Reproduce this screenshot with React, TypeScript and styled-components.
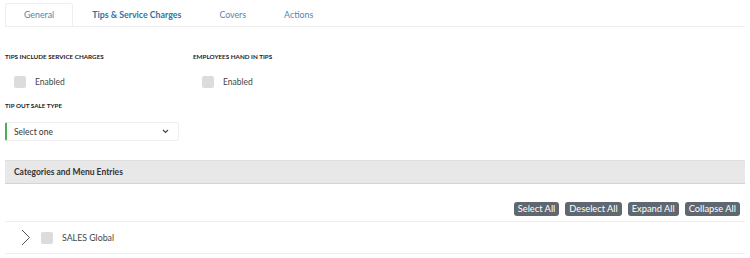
import React from "react";
import styled, { createGlobalStyle } from "styled-components";

const GlobalStyle = createGlobalStyle`
  html, body {
    margin: 0;
    padding: 0;
    background: #ffffff;
    font-family: Lato, "Open Sans", sans-serif;
    color: #333;
  }
`;

const Page = styled.div`
  width: 750px;
  height: 258px;
  padding: 3px 5px 0 5px;
  box-sizing: border-box;
  overflow: hidden;
`;

const TabBar = styled.div`
  display: flex;
  height: 23px;
  border-bottom: 1px solid #eeeeee;
`;

const Tab = styled.div<{ active?: boolean; bold?: boolean }>`
  display: flex;
  align-items: center;
  justify-content: center;
  height: 23px;
  box-sizing: border-box;
  padding: 0 18px 2px;
  font-size: 8.8px;
  font-weight: ${(p) => (p.bold ? 700 : 400)};
  color: ${(p) => (p.bold ? "#2b74a8" : "#4a87b3")};
  border: 1px solid ${(p) => (p.active ? "#eeeeee" : "transparent")};
  border-bottom: none;
  border-radius: 3px 3px 0 0;
  background: #fff;
  margin-bottom: -1px;
`;

const FieldRow = styled.div`
  display: flex;
  margin-top: 25px;
`;

const Field = styled.div<{ width?: number }>`
  width: ${(p) => p.width ?? 188}px;
`;

const Label = styled.div`
  font-size: 6.3px;
  font-weight: 700;
  color: #222;
  text-transform: uppercase;
  line-height: 10px;
`;

const CheckLine = styled.label`
  display: flex;
  align-items: center;
  gap: 9px;
  margin-top: 14px;
  padding-left: 9px;
  font-size: 8.5px;
  color: #444;
`;

const Box = styled.span`
  width: 12px;
  height: 12px;
  border-radius: 2px;
  background: #dcdcdc;
  display: inline-block;
`;

const SaleType = styled.div`
  margin-top: 13px;
`;

const Select = styled.div`
  margin-top: 11px;
  width: 174px;
  height: 19px;
  box-sizing: border-box;
  border: 1px solid #efefef;
  border-left: 2px solid #4cae4f;
  border-radius: 2px;
  display: flex;
  align-items: center;
  justify-content: space-between;
  padding: 0 9px 0 7px;
  font-size: 8.5px;
  color: #333;
`;

const SectionHeader = styled.div`
  margin-top: 19px;
  height: 24px;
  background: #e8e8e8;
  border-top: 1px solid #dedede;
  border-bottom: 1px solid #d4d4d4;
  box-sizing: border-box;
  display: flex;
  align-items: center;
  padding-left: 9px;
  font-size: 8.5px;
  font-weight: 700;
  color: #333;
`;

const Toolbar = styled.div`
  display: flex;
  justify-content: flex-end;
  gap: 6px;
  margin-top: 18px;
  padding-right: 5px;
  padding-bottom: 5px;
  border-bottom: 1px solid #eeeeee;
`;

const Btn = styled.button`
  height: 14px;
  padding: 0 4px;
  border: none;
  border-radius: 3px;
  background: #5f6770;
  color: #fff;
  font-family: inherit;
  font-size: 9.3px;
  line-height: 14px;
`;

const TreeRow = styled.div`
  display: flex;
  align-items: center;
  height: 31px;
  padding-left: 16px;
  border-bottom: 1px solid #eeeeee;
  font-size: 8.8px;
  color: #444;
`;

const Caret = styled.svg`
  width: 10px;
  height: 17px;
  margin-right: 10px;
`;

const RowLabel = styled.span`
  margin-left: 9px;
`;

export default function App() {
  return (
    <>
      <GlobalStyle />
      <Page>
        <TabBar>
          <Tab active>General</Tab>
          <Tab bold>Tips &amp; Service Charges</Tab>
          <Tab>Covers</Tab>
          <Tab>Actions</Tab>
        </TabBar>
        <FieldRow>
          <Field>
            <Label>Tips include service charges</Label>
            <CheckLine>
              <Box />
              Enabled
            </CheckLine>
          </Field>
          <Field>
            <Label>Employees hand in tips</Label>
            <CheckLine>
              <Box />
              Enabled
            </CheckLine>
          </Field>
        </FieldRow>
        <SaleType>
          <Label>Tip out sale type</Label>
          <Select>
            <span>Select one</span>
            <svg width="7" height="5" viewBox="0 0 7 5">
              <path d="M1 1 L3.5 3.5 L6 1" fill="none" stroke="#444" strokeWidth="1.1" />
            </svg>
          </Select>
        </SaleType>
        <SectionHeader>Categories and Menu Entries</SectionHeader>
        <Toolbar>
          <Btn>Select All</Btn>
          <Btn>Deselect All</Btn>
          <Btn>Expand All</Btn>
          <Btn>Collapse All</Btn>
        </Toolbar>
        <TreeRow>
          <Caret viewBox="0 0 10 17">
            <path d="M1 1 L8.5 8.5 L1 16" fill="none" stroke="#555" strokeWidth="1" />
          </Caret>
          <Box />
          <RowLabel>SALES Global</RowLabel>
        </TreeRow>
      </Page>
    </>
  );
}
